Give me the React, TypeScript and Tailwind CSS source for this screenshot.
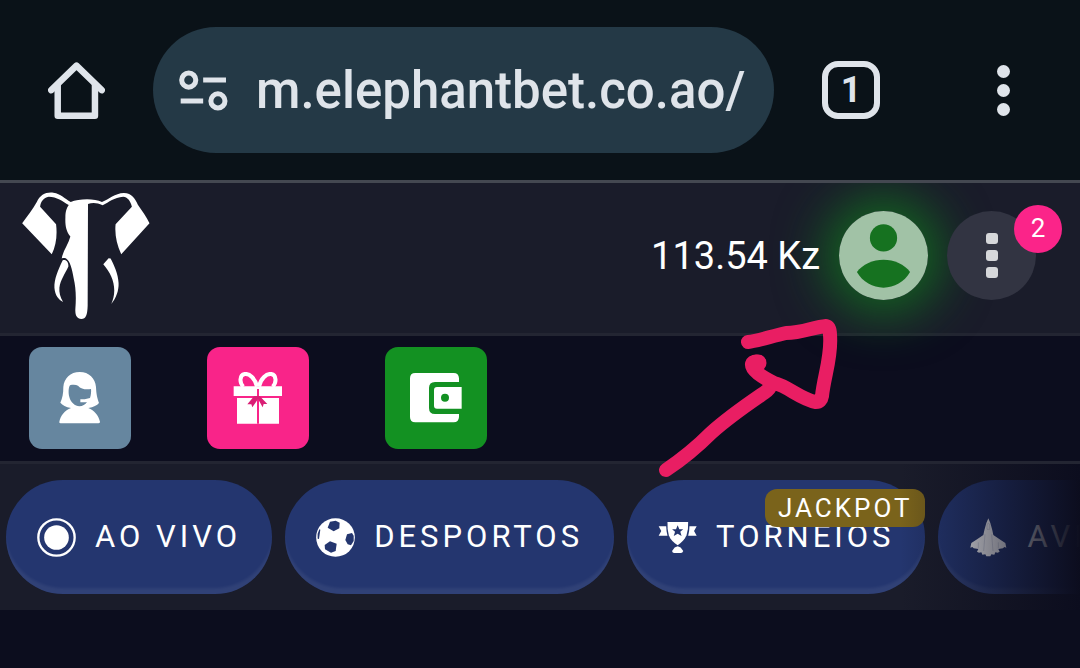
import type { ReactNode } from "react"

type IconProps = { className?: string }

const HomeIcon = ({ className }: IconProps) => (
  <svg viewBox="142 122 176 178" className={className} fill="none" stroke="currentColor" strokeWidth="20" strokeLinecap="round" strokeLinejoin="round" aria-hidden="true">
    <path d="M152 210 230 134 308 210" />
    <path d="M172 194V289H287V194" />
  </svg>
)

const TuneIcon = ({ className }: IconProps) => (
  <svg viewBox="538 139 146 146" className={className} fill="none" stroke="currentColor" strokeWidth="15" aria-hidden="true">
    <circle cx="567" cy="181" r="21" />
    <path d="M610 181H678M543 243H610" />
    <circle cx="654" cy="243" r="21" />
  </svg>
)

const ElephantLogo = ({ className }: IconProps) => (
  <svg viewBox="36 38 384 382" className={className} fill="currentColor" role="img" aria-label="Elephantbet">
    <path d="M36 132 C50 112 68 90 80 68 C90 46 108 37 130 40 C152 43 164 58 182 68 C206 58 252 56 276 68 C298 60 314 42 342 41 C366 41 376 60 384 76 C396 94 410 112 419 132 L334 225 C320 195 314 165 317 135 L366 82 C362 64 352 53 340 52 C312 54 298 68 278 78 C262 70 248 69 234 74 L233 380 C232 408 228 419 214 420 C200 419 195 408 196 390 C199 350 197 325 191 298 C186 268 180 246 168 238 C164 236 159 236 155 238 C158 216 176 194 181 172 C168 156 165 138 166 114 C166 96 170 86 176 77 C158 66 140 52 116 52 C100 56 92 66 90 82 L138 135 C142 168 138 200 125 225 Z" />
    <path d="M158 243 C144 272 132 300 133 326 C135 350 146 362 159 369 C150 354 147 340 148 326 C151 302 165 284 175 262 C176 248 168 240 158 243 Z" />
    <path d="M296 237 L280 255 C300 278 313 304 313 334 C313 350 309 362 304 375 C318 358 327 336 326 312 C325 284 312 258 302 238 Z" />
  </svg>
)

const UserIcon = ({ className }: IconProps) => (
  <svg viewBox="0 0 268 268" className={className} aria-hidden="true">
    <circle cx="134" cy="134" r="134" fill="#a1c2a6" />
    <circle cx="134" cy="81" r="41" fill="#167220" />
    <path d="M54 184C70 161 103 147 134 147S198 161 214 184C197 214 166 231 134 231S71 214 54 184Z" fill="#167220" />
  </svg>
)

const SupportIcon = ({ className }: IconProps) => (
  <svg viewBox="132 111 156 156" className={className} fill="currentColor" aria-hidden="true">
    <path fillRule="evenodd" d="M209 111 C237 111 256 130 258 156 C259 178 262 190 267 204 C261 212 251 216 235 219 C253 226 266 242 270 260 Q270 265 265 265 H152 Q147 265 148 260 C152 242 164 226 183 219 C167 216 158 211 151 203 C157 190 160 176 160 156 C162 130 181 111 209 111 Z M180 151 C175 158 175 175 178 186 C182 202 195 213 208 214 C218 214 226 209 231 202 H211 V193 H224 L240 189 C243 180 244 170 243 162 C228 164 213 163 204 152 C198 149 188 149 180 151 Z" />
  </svg>
)

const GiftIcon = ({ className }: IconProps) => (
  <svg viewBox="666 111 156 156" className={className} aria-hidden="true">
    <path d="M741 155 C736 130 718 115 704 117 C688 120 688 144 700 155 M747 155 C752 130 770 115 784 117 C800 120 800 144 788 155" fill="none" stroke="currentColor" strokeWidth="12" />
    <path d="M671 154H816V183H671ZM681 189H807V266H681Z" fill="currentColor" />
    <path d="M744 162V266" stroke="#f92489" strokeWidth="6" />
    <path d="M739 183H749L772 207 761 207 758 217 744 192 727 217 724 208 712 208 732 184Z" fill="#d91f75" />
  </svg>
)

const WalletIcon = ({ className }: IconProps) => (
  <svg viewBox="1203 111 156 156" className={className} fill="currentColor" aria-hidden="true">
    <path d="M1219 114H1334Q1349 114 1350 130V141H1278Q1260 141 1260 159V219Q1260 237 1278 237H1350V246Q1349 262 1334 262H1219Q1203 262 1203 246V130Q1203 114 1219 114Z" />
    <path fillRule="evenodd" d="M1284 156H1358V221H1284Q1275 221 1275 212V165Q1275 156 1284 156ZM1308 176A12 12 0 1 0 1308 200A12 12 0 1 0 1308 176Z" />
  </svg>
)

const LiveIcon = () => (
  <svg viewBox="0 0 117 117" className="size-[39px]" aria-hidden="true">
    <circle cx="58.5" cy="58.5" r="54.5" fill="none" stroke="currentColor" strokeWidth="7" />
    <circle cx="58.5" cy="58.5" r="37" fill="currentColor" />
  </svg>
)

const BallIcon = () => (
  <svg viewBox="49 173 117 117" className="size-[39px]" aria-hidden="true">
    <circle cx="107.5" cy="231.5" r="58" fill="currentColor" />
    <g fill="#24366f">
      <path d="M91 184 108 181 120 187 119 204 102 213 84 202Z" />
      <path d="M91 243 111 250 108 272 94 277 76 267 75 254Z" />
      <path d="M142 222 157 218 162 226 162 242 154 255 144 252 137 239Z" />
      <path d="M59 207 62 208 58 236 54 235Q52 219 59 207Z" />
    </g>
  </svg>
)

const TrophyIcon = () => (
  <svg viewBox="113 173 119 117" className="size-[39px]" aria-hidden="true">
    <g fill="currentColor">
      <path d="M142 184H205Q206 208 200 225C194 239 184 248 173 255C161 248 151 239 146 225Q141 208 142 184Z" />
      <path d="M115 197H138Q138 211 142 226H115L123 212Z" />
      <path d="M231 197H209Q209 211 205 226H231L223 212Z" />
      <path d="M173 258 182 262 190 273Q188 279 183 279H162Q157 279 156 273L164 262Z" />
    </g>
    <path d="M173 194 178 206 190 206 181 214 185 227 173 220 161 227 165 214 156 206 168 206Z" fill="#24366f" />
  </svg>
)

const JetIcon = () => (
  <svg viewBox="1048 173 117 117" className="size-[39px]" aria-hidden="true">
    <path d="M1106 174 1112 188 1118 210 1121 224 1142 238 1157 248 1160 262 1154 260 1150 264 1136 266 1140 274 1134 277 1127 276 1124 283 1115 282 1112 288H1100L1097 282 1088 283 1085 276 1078 277 1072 274 1076 266 1062 264 1058 260 1052 262 1055 248 1070 238 1091 224 1094 210 1100 188Z" fill="currentColor" />
    <path d="M1102 192Q1106 186 1110 192V207H1102ZM1096 222 1092 272M1116 222 1120 272M1076 246V264M1136 246V264" fill="none" stroke="#24366f" strokeOpacity=".25" strokeWidth="2" />
  </svg>
)

const shortcuts = [
  { label: "Suporte", color: "bg-[#66869f]", Icon: SupportIcon },
  { label: "Bónus", color: "bg-[#f92489]", Icon: GiftIcon },
  { label: "Carteira", color: "bg-[#139122]", Icon: WalletIcon },
]

function NavPill({ icon, label, tag }: { icon: ReactNode; label: string; tag?: string }) {
  return (
    <a
      href="#"
      className="relative flex h-[114px] shrink-0 items-center gap-[19px] rounded-full bg-[#24366f] px-[31px] text-[31px] leading-[40px] tracking-[4px] whitespace-nowrap shadow-[inset_0_-7px_3px_-1px_rgba(255,255,255,0.06)]"
    >
      {icon}
      <span>{label}</span>
      {tag && (
        <span className="absolute top-[9px] right-0 rounded-xl bg-[#7a631b] px-[13px] text-[26px] leading-[38px] tracking-[3px]">
          {tag}
        </span>
      )}
    </a>
  )
}

export default function App() {
  return (
    <div className="min-h-screen overflow-hidden bg-[#0c0d1e] font-[Roboto,sans-serif] text-white">
      <div className="relative z-10 flex h-[183px] items-center gap-12 border-b-3 border-[#444851] bg-[#0a1218] px-12 text-[#dfe4ea]">
        <button aria-label="Home">
          <HomeIcon className="h-[59px] w-[57px]" />
        </button>
        <div className="flex h-[126px] min-w-0 flex-1 items-center gap-7 rounded-full bg-[#243946] px-[26px]">
          <TuneIcon className="size-[49px] shrink-0" />
          <input
            aria-label="Address"
            readOnly
            defaultValue="m.elephantbet.co.ao/"
            className="h-20 w-full min-w-0 bg-transparent text-[51px] font-medium outline-none"
          />
        </div>
        <button aria-label="Tabs" className="flex size-[58px] shrink-0 items-center justify-center rounded-2xl border-6 border-current text-[36px] leading-none font-bold">
          1
        </button>
        <button aria-label="Browser menu" className="ml-[46px] flex w-[58px] shrink-0 flex-col items-center gap-[6px]">
          <span className="size-[13px] rounded-full bg-current" />
          <span className="size-[13px] rounded-full bg-current" />
          <span className="size-[13px] rounded-full bg-current" />
        </button>
      </div>

      <header className="relative flex h-[153px] items-center border-b-3 border-[#232532] bg-[#1a1c2a] pr-11 pb-[5px] pl-[22px]">
        <ElephantLogo className="h-[127px] w-32" />
        <span className="relative z-10 ml-auto text-[38px] leading-[48px]">113.54 Kz</span>
        <button aria-label="Account" className="ml-[19px] rounded-full shadow-[0_0_50px_14px_rgba(18,120,30,0.8)]">
          <UserIcon className="size-[89px]" />
        </button>
        <button aria-label="Menu" className="relative ml-[19px] flex size-[89px] flex-col items-center justify-center gap-[6px] rounded-full bg-[#323442]">
          <span className="h-[11px] w-3 rounded-[3px] bg-[#d6d7da]" />
          <span className="h-[11px] w-3 rounded-[3px] bg-[#d6d7da]" />
          <span className="h-[11px] w-3 rounded-[3px] bg-[#d6d7da]" />
          <span className="absolute -top-[6px] -right-[26px] size-12 rounded-full bg-[#fb2489] text-center text-[26px] leading-[46px]">2</span>
        </button>
        {/* hand-drawn arrow pointing at the account button */}
        <svg viewBox="655 310 190 175" className="pointer-events-none absolute top-[127px] right-[235px] z-10 h-[175px] w-[190px]" fill="none" stroke="#e91e63" strokeWidth="14" strokeLinecap="round" strokeLinejoin="round" aria-hidden="true">
          <path d="M666 470C684 458 698 446 711 433C730 416 748 404 764 393Q770 389 772 383" />
          <path d="M748 342C758 341 772 336 786 333C802 333 814 327 826 326Q830 327 830 335C832 356 824 376 822 396Q821 402 816 402C800 399 788 386 774 383C762 377 751 370 752 364Q753 361 759 362" />
          <path d="M756 363h2" strokeWidth="17" />
        </svg>
      </header>

      <div className="flex gap-[76px] border-b-3 border-[#232532] px-[29px] pt-[11px] pb-3">
        {shortcuts.map(({ label, color, Icon }) => (
          <button key={label} aria-label={label} className={`flex size-[102px] items-center justify-center rounded-[13px] ${color}`}>
            <Icon className="size-[52px]" />
          </button>
        ))}
      </div>

      <nav className="relative flex gap-[13px] overflow-hidden bg-[#1a1c2a] px-[6px] py-4">
        <NavPill icon={<LiveIcon />} label="AO VIVO" />
        <NavPill icon={<BallIcon />} label="DESPORTOS" />
        <NavPill icon={<TrophyIcon />} label="TORNEIOS" tag="JACKPOT" />
        <NavPill icon={<JetIcon />} label="AVIATOR" />
        <div className="pointer-events-none absolute inset-y-0 right-0 w-[180px] bg-linear-to-r from-transparent to-[#0c0d1e]" />
      </nav>
    </div>
  )
}
